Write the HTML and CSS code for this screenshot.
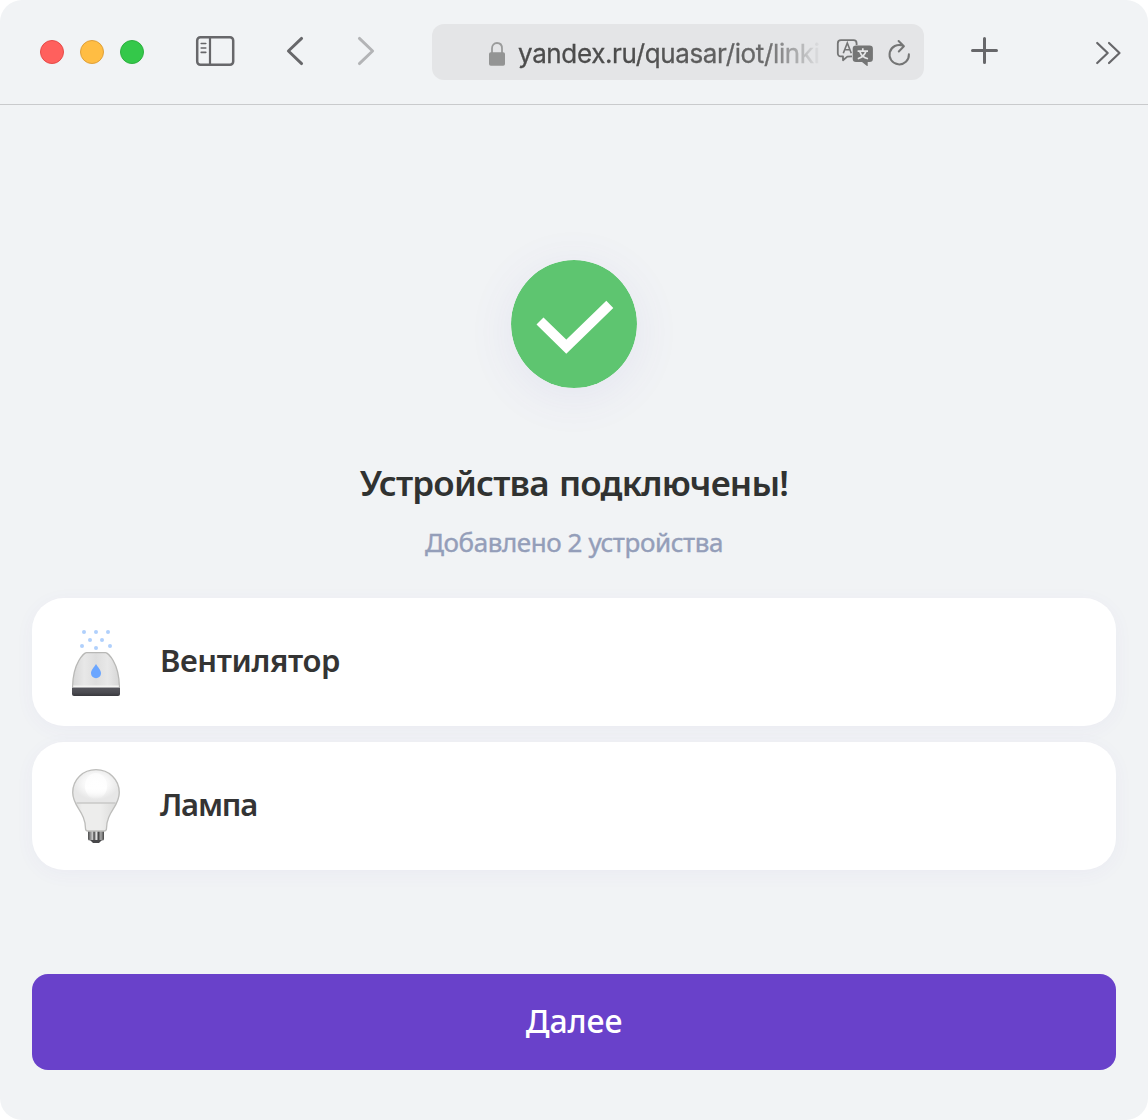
FILE: index.html
```html
<!DOCTYPE html>
<html lang="ru">
<head>
<meta charset="utf-8">
<title>Устройства подключены</title>
<link rel="stylesheet" href="styles.css">
</head>
<body>
<div class="window">
  <header class="toolbar">
    <div class="lights"><span class="light light-close"></span><span class="light light-min"></span><span class="light light-max"></span></div>
    <svg class="sidebar-icon" width="40" height="32" viewBox="0 0 40 32" fill="none" stroke="#67676a">
      <rect x="2.2" y="2.2" width="36" height="27.5" rx="3.2" stroke-width="2.5"/>
      <path d="M15 2v28" stroke-width="2.2"/>
      <path d="M6.2 8.5h4.6M6.2 13h4.6M6.2 17.4h4.6" stroke-width="1.6" stroke-linecap="round"/>
    </svg>
    <svg class="back-icon" width="20" height="32" viewBox="0 0 20 32" fill="none" stroke="#67676a" stroke-width="2.9" stroke-linecap="round" stroke-linejoin="round"><path d="M16.6 3.4L3.4 16 16.6 28.6"/></svg>
    <svg class="forward-icon" width="20" height="32" viewBox="0 0 20 32" fill="none" stroke="#b3b4b6" stroke-width="2.9" stroke-linecap="round" stroke-linejoin="round"><path d="M3.4 3.4L16.6 16 3.4 28.6"/></svg>
    <div class="address">
      <svg class="lock" width="18" height="26" viewBox="0 0 18 26"><path d="M4 12V7.5C4 4.200 6 2 9 2s5 2.200 5 5.500V12" fill="none" stroke="#9a9b9b" stroke-width="1.8"/><rect x="1" y="11.200" width="16" height="13.500" rx="1.800" fill="#939494"/></svg>
      <span class="url">yandex.ru/quasar/iot/linki</span>
      <svg class="translate" width="38" height="30" viewBox="0 0 38 30" fill="none">
        <path d="M16 18.400L11.300 18.600 7 22.200V18.400H4.800C2.800 18.400 1.800 17 1.800 15.200V5.400C1.800 3.400 3 2.200 5 2.200H17.500C19.500 2.200 20.600 3.400 20.600 5.400V7" stroke="#747575" stroke-width="1.800" stroke-linejoin="round"/>
        <path d="M7.300 15.200L11.300 4.900 15.300 15.200M8.700 11.800H13.900" stroke="#747575" stroke-width="1.600"/>
        <path d="M20 7.500H33.500Q36.900 7.500 36.900 10.800V20.800Q36.900 24 33.500 24H31.700V27.500Q31.700 28.500 30.700 27.800L26 24H20Q16.700 24 16.700 20.800V10.800Q16.700 7.500 20 7.500Z" fill="#747575"/>
        <path d="M21.600 13.200H32M26.800 10.200V13.200M29.800 13.500C28.800 17 26 19.500 21.800 20.700M23.800 13.500C25 17.300 28 19.700 32 20.700" stroke="#e5e6e7" stroke-width="1.700"/>
      </svg>
      <svg class="reload" width="24" height="28" viewBox="0 0 24 28" fill="none" stroke="#747575" stroke-width="2" stroke-linecap="round" stroke-linejoin="round"><path d="M21.900 15.200A9.700 9.700 0 1 1 15.900 6.700M11.600 2L16.900 7.300 11.800 12.500"/></svg>
    </div>
    <svg class="plus" width="30" height="30" viewBox="0 0 30 30" stroke="#67676a" stroke-width="3" stroke-linecap="round"><path d="M14.500 2.500v24M2.500 14.500h24"/></svg>
    <svg class="more" width="28" height="26" viewBox="0 0 28 26" fill="none" stroke="#67676a" stroke-width="2.200" stroke-linecap="round" stroke-linejoin="round"><path d="M2.200 3L12.700 13 2.200 23M14 3L24.500 13 14 23"/></svg>
  </header>
  <main class="page">
    <svg class="success" width="126" height="128" viewBox="0 0 126 128"><ellipse cx="63" cy="64" rx="63" ry="64" fill="#5ec570"/><path d="M29 61L55.300 86.700 98.800 44.300" fill="none" stroke="#fff" stroke-width="10"/></svg>
    <h1 class="title">Устройства подключены!</h1>
    <p class="subtitle">Добавлено 2 устройства</p>
    <ul class="devices">
      <li class="device">
        <svg class="device-icon" width="48" height="80" viewBox="0 -2 48 80">
          <defs>
            <linearGradient id="dome"><stop offset="0" stop-color="#d6d6d6"/><stop offset=".25" stop-color="#e8e8e8"/><stop offset=".5" stop-color="#dedede"/><stop offset=".75" stop-color="#e8e8e8"/><stop offset="1" stop-color="#d6d6d6"/></linearGradient>
            <linearGradient id="base" x2="0" y2="1"><stop stop-color="#57575d"/><stop offset=".6" stop-color="#4b4b51"/><stop offset="1" stop-color="#38383d"/></linearGradient>
          </defs>
          <g fill="#b0d0fc"><circle cx="12" cy="8" r="2"/><circle cx="24" cy="8" r="2"/><circle cx="36" cy="8" r="2"/><circle cx="18" cy="16" r="2"/><circle cx="30" cy="16" r="2"/><circle cx="10" cy="22" r="2"/><circle cx="24" cy="24" r="2"/><circle cx="38" cy="22" r="2"/></g>
          <path d="M14.500 28.600H33.500C35.500 28.600 47 38 47.400 62.500H.6C1 38 12.500 28.600 14.500 28.600Z" fill="url(#dome)" stroke="#b8b8b6" stroke-width="1.200"/>
          <path d="M1.200 62.300H46.800" stroke="#f4f4f2" stroke-width="1.500"/>
          <path d="M24 40C26 43.500 29 46 29 49.200A5 5 0 0 1 19 49.200C19 46 22 43.500 24 40Z" fill="#6ba6ff"/>
          <path d="M0 63.500H48V70Q48 72 46 72H2Q0 72 0 70Z" fill="url(#base)"/>
        </svg>
        <span class="device-name">Вентилятор</span>
      </li>
      <li class="device">
        <svg class="device-icon" width="48" height="80" viewBox="0 3 48 80">
          <defs>
            <linearGradient id="bulb"><stop stop-color="#d8d8d7"/><stop offset=".2" stop-color="#ededec"/><stop offset=".6" stop-color="#ededec"/><stop offset="1" stop-color="#d8d8d7"/></linearGradient>
            <radialGradient id="glow" cy=".4"><stop stop-color="#fff"/><stop offset=".55" stop-color="#f8f8f8"/><stop offset="1" stop-color="#e7e7e7"/></radialGradient>
            <linearGradient id="shine" x2="0" y2="1"><stop stop-color="#fff" stop-opacity=".6"/><stop offset=".6" stop-color="#fff"/><stop offset="1" stop-color="#fff" stop-opacity="0"/></linearGradient>
            <linearGradient id="metal"><stop stop-color="#4a4a4a"/><stop offset=".28" stop-color="#c8c8c8"/><stop offset=".38" stop-color="#444"/><stop offset=".52" stop-color="#eee"/><stop offset=".65" stop-color="#444"/><stop offset=".8" stop-color="#aaa"/><stop offset="1" stop-color="#444"/></linearGradient>
          </defs>
          <path d="M16 66H32V76Q32 77.500 30 77.500H18Q16 77.500 16 76Z" fill="url(#metal)"/><path d="M18 77H30L27 80H21Z" fill="#48484a"/>
          <path d="M.7 29.500C.7 16.500 11 6.700 24 6.700S47.300 16.500 47.300 29.500C47.300 44 34.500 48.500 34.500 65.500Q34.500 68 32 68H16Q13.500 68 13.500 65.500C13.500 48.500.7 44 .7 29.500Z" fill="url(#bulb)"/>
          <path d="M1.300 29.500C1.300 17 11.300 7.400 24 7.400S46.700 17 46.700 29.500Q46.700 36 43.500 40H4.500Q1.300 36 1.300 29.500Z" fill="url(#glow)"/>
          <ellipse cx="24" cy="23" rx="11" ry="13" fill="url(#shine)"/>
          <path d="M4.500 40H43.500" stroke="#c8c8c7" stroke-width="1.500"/>
          <path d="M.7 29.500C.7 16.500 11 6.700 24 6.700S47.300 16.500 47.300 29.500C47.300 44 34.500 48.500 34.500 65.500Q34.500 68 32 68H16Q13.500 68 13.500 65.500C13.500 48.500.7 44 .7 29.500Z" fill="none" stroke="#bdbdbb" stroke-width="1.300"/>
        </svg>
        <span class="device-name device-name-lamp">Лампа</span>
      </li>
    </ul>
    <button class="next" type="button">Далее</button>
  </main>
</div>
</body>
</html>
```
FILE: styles.css
```css
* { box-sizing: border-box; }
body { margin: 0; background: #fff; font-family: "Noto Sans", "Open Sans", sans-serif; }
.window { width: 1148px; height: 1120px; border-radius: 22px; background: #f1f3f5; overflow: hidden; }
.toolbar { height: 105px; display: flex; align-items: flex-start; border-bottom: 1px solid #c9cacc; }
.lights { display: flex; gap: 16px; margin: 40px 0 0 40px; }
.light { width: 24px; height: 24px; border-radius: 50%; border: 1px solid; }
.light-close { background: #ff605d; border-color: #e64b48; }
.light-min { background: #ffbd43; border-color: #dfa03a; }
.light-max { background: #34c84a; border-color: #2db03f; }
.toolbar svg { flex: none; }
.sidebar-icon { margin: 35px 0 0 51px; }
.back-icon { margin: 35px 0 0 50px; }
.forward-icon { margin: 35px 0 0 51px; }
.address { flex: none; display: flex; align-items: flex-start; width: 492px; height: 56px; margin: 24px 0 0 56px; padding-left: 56px; border-radius: 12px; background: #e4e5e7; }
.lock { margin-top: 17px; }
.url { width: 304px; margin-left: 12px; font: 400 26px/56px Inter, sans-serif; padding-top: 2px; height: 58px; letter-spacing: -.36px; color: #4c4c4c; -webkit-text-stroke: .3px; white-space: nowrap; -webkit-mask-image: linear-gradient(90deg, #000 35%, rgba(0,0,0,.8) 82%, transparent); mask-image: linear-gradient(90deg, #000 35%, rgba(0,0,0,.8) 82%, transparent); }
.translate { margin: 14px 0 0 14px; }
.reload { margin: 15px 0 0 13px; }
.plus { margin: 36px 0 0 46px; }
.more { margin: 40px 0 0 95px; }
.page { display: flex; flex-direction: column; align-items: center; padding: 155px 32px 0; }
.success { display: block; border-radius: 50%; box-shadow: 0 8px 48px rgba(90, 80, 180, .085); }
.title { margin: 71px 0 0; font-size: 35px; line-height: 48px; font-weight: 600; letter-spacing: -.8px; word-spacing: 2px; color: #303231; }
.subtitle { margin: 17px 0 0; font-size: 26px; line-height: 36px; letter-spacing: -.42px; color: #949eb9; -webkit-text-stroke: .4px; }
.title, .subtitle { white-space: nowrap; }
.devices { width: 100%; margin: 38px 0 0; padding: 0; list-style: none; display: flex; flex-direction: column; gap: 16px; }
.device { display: flex; align-items: center; height: 128px; padding: 0 40px; border-radius: 32px; background: #fff; box-shadow: 0 4px 20px rgba(90, 80, 180, .045); }
.device-icon { display: block; }
.device-name { margin: -5px 0 0 40px; font-size: 31px; line-height: 44px; font-weight: 600; letter-spacing: -.4px; color: #343434; }
.device-name-lamp { letter-spacing: -1.2px; }
.next { width: 100%; height: 96px; margin-top: 104px; padding: 0 0 3px; border: 0; border-radius: 16px; background: #6941ca; color: #fff; font: 500 32px/44px "Noto Sans", sans-serif; letter-spacing: -.1px; }
```
